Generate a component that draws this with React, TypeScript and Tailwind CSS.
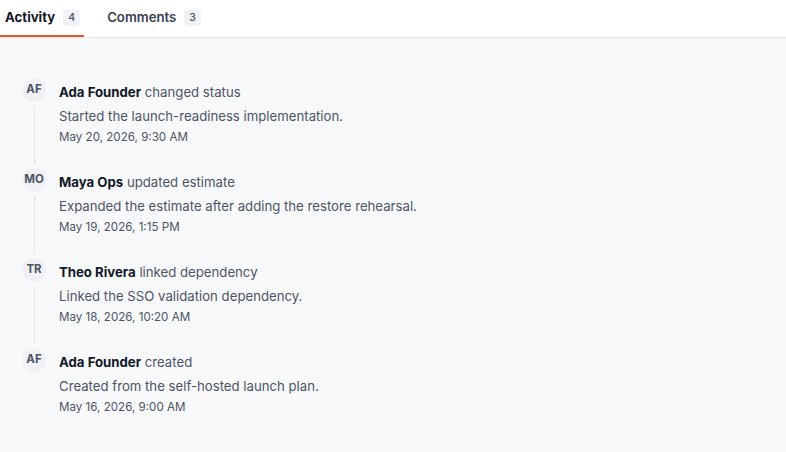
import React from "react";

type Entry = {
  initials: string;
  name: string;
  action: string;
  note: string;
  when: string;
};

const entries: Entry[] = [
  {
    initials: "AF",
    name: "Ada Founder",
    action: "changed status",
    note: "Started the launch-readiness implementation.",
    when: "May 20, 2026, 9:30 AM",
  },
  {
    initials: "MO",
    name: "Maya Ops",
    action: "updated estimate",
    note: "Expanded the estimate after adding the restore rehearsal.",
    when: "May 19, 2026, 1:15 PM",
  },
  {
    initials: "TR",
    name: "Theo Rivera",
    action: "linked dependency",
    note: "Linked the SSO validation dependency.",
    when: "May 18, 2026, 10:20 AM",
  },
  {
    initials: "AF",
    name: "Ada Founder",
    action: "created",
    note: "Created from the self-hosted launch plan.",
    when: "May 16, 2026, 9:00 AM",
  },
];

function Tab({ label, count, active }: { label: string; count: number; active?: boolean }) {
  return (
    <div
      className={
        active
          ? "flex h-full items-center gap-[8px] pl-[5px] pr-[4px] pt-px border-b-2 border-[#e0552b]"
          : "flex h-full items-center gap-[8px] pl-[5px] pr-[4px] pt-px border-b-2 border-transparent"
      }
    >
      <span
        className={
          active
            ? "text-[13.2px] font-bold text-[#111827]"
            : "text-[13.2px] font-semibold text-[#374151]"
        }
      >
        {label}
      </span>
      <span className="rounded-[4px] bg-[#f0f2f5] px-[5px] text-[10.5px] leading-[16px] font-medium text-[#4b5563]">
        {count}
      </span>
    </div>
  );
}

function Item({ entry, last }: { entry: Entry; last: boolean }) {
  return (
    <div className="flex h-[90px] gap-[13px]">
      <div className="flex w-[24px] flex-col items-center">
        <div className="flex h-[24px] w-[24px] shrink-0 items-center justify-center rounded-full bg-[#eff1f4] pb-px text-[11.5px] font-bold text-[#4b5563]">
          {entry.initials}
        </div>
        {!last && <div className="my-[4px] w-px flex-1 bg-[#e4e7eb]" />}
      </div>
      <div className="flex flex-col pt-[4px]">
        <div className="text-[13.2px] leading-[20px] text-[#4b5563]">
          <span className="font-bold text-[#111827]">{entry.name}</span> {entry.action}
        </div>
        <div className="mt-[4px] text-[13.2px] leading-[20px] text-[#4b5563]">{entry.note}</div>
        <div className="mt-[2px] text-[11.6px] leading-[18px] text-[#4b5563]">{entry.when}</div>
      </div>
    </div>
  );
}

export default function App() {
  return (
    <div
      className="h-[452px] w-[786px] overflow-hidden bg-[#f8f9fb]"
      style={{ fontFamily: "Inter, 'Noto Sans', sans-serif" }}
    >
      <div className="flex h-[38px] items-stretch gap-[18px] border-b border-[#e5e7eb] bg-white">
        <Tab label="Activity" count={4} active />
        <Tab label="Comments" count={3} />
      </div>
      <div className="pl-[22px] pt-[40px]">
        {entries.map((e, i) => (
          <Item key={i} entry={e} last={i === entries.length - 1} />
        ))}
      </div>
    </div>
  );
}
